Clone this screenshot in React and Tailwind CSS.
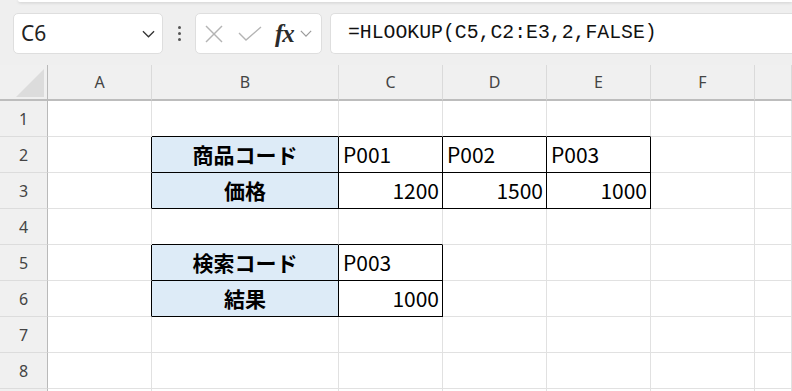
import React from 'react';

const cols = ['A', 'B', 'C', 'D', 'E', 'F', ''];

// cell contents keyed by "col+row"
const cells = {
  B2: { text: '商品コード', label: true },
  C2: { text: 'P001' },
  D2: { text: 'P002' },
  E2: { text: 'P003' },
  B3: { text: '価格', label: true },
  C3: { text: '1200', num: true },
  D3: { text: '1500', num: true },
  E3: { text: '1000', num: true },
  B5: { text: '検索コード', label: true },
  C5: { text: 'P003' },
  B6: { text: '結果', label: true },
  C6: { text: '1000', num: true },
};

const boxed = new Set(['B2', 'C2', 'D2', 'E2', 'B3', 'C3', 'D3', 'E3', 'B5', 'C5', 'B6', 'C6']);

const colName = (i) => 'ABCDEFG'[i];

const hasBlackRight = (c, r) => {
  const me = colName(c) + r;
  const next = colName(c + 1) + r;
  return boxed.has(me) || boxed.has(next);
};

const hasBlackBottom = (c, r) => {
  const me = colName(c) + r;
  const below = colName(c) + (r + 1);
  return boxed.has(me) || boxed.has(below);
};

const Chevron = ({ className }) => (
  <svg viewBox="0 0 14 8" className={className} fill="none" stroke="currentColor" strokeWidth="1.4">
    <polyline points="1,1 7,7 13,1" />
  </svg>
);

const Toolbar = () => (
  <div className="relative h-[65px] bg-[#efefef]">
    <div className="absolute left-[18px] right-0 top-0 h-[2px] bg-white rounded-bl-[4px] shadow-[0_1px_3px_rgba(0,0,0,0.15)]"></div>
    <div className="flex items-start pt-[13px] pl-[13px]">
      {/* Name box */}
      <div className="w-[150px] h-[41px] bg-white border border-[#dedede] rounded-[5px] flex items-center pl-[7px] pr-[7px]">
        <span className="flex-1 text-[21px] text-[#222] font-['Noto_Sans',sans-serif] leading-none">C6</span>
        <Chevron className="w-[13px] h-[8px] text-[#333]" />
      </div>
      {/* Dots */}
      <div className="w-[32px] h-[41px] flex flex-col items-center justify-center gap-[3px]">
        <span className="w-[3px] h-[3px] rounded-full bg-[#555]"></span>
        <span className="w-[3px] h-[3px] rounded-full bg-[#555]"></span>
        <span className="w-[3px] h-[3px] rounded-full bg-[#555]"></span>
      </div>
      {/* Cancel / enter / fx */}
      <div className="w-[127px] h-[41px] bg-white border border-[#dedede] rounded-[5px] flex items-center pl-[8px]">
        <svg viewBox="0 0 20 20" className="w-[20px] h-[20px] text-[#b4b4b4]" fill="none" stroke="currentColor" strokeWidth="1.4">
          <line x1="2" y1="2" x2="18" y2="18" />
          <line x1="18" y1="2" x2="2" y2="18" />
        </svg>
        <svg viewBox="0 0 24 16" className="ml-[14px] w-[24px] h-[16px] text-[#b4b4b4]" fill="none" stroke="currentColor" strokeWidth="1.4">
          <polyline points="1,7 8,14 23,1" />
        </svg>
        <span className="ml-[13px] font-['Liberation_Serif',serif] italic font-bold text-[25px] text-[#2b2b2b] leading-none tracking-[-1px]">fx</span>
        <Chevron className="ml-[6px] w-[12px] h-[7px] text-[#9a9a9a]" />
      </div>
      {/* Formula bar */}
      <div className="ml-[8px] flex-1 h-[41px] bg-white border border-[#dedede] border-r-0 rounded-l-[5px] flex items-center pl-[17px]">
        <span className="font-['Liberation_Mono',monospace] text-[19.8px] text-[#111] leading-none">=HLOOKUP(C5,C2:E3,2,FALSE)</span>
      </div>
    </div>
  </div>
);

const HeaderRow = () => (
  <div className="grid grid-cols-[48px_104px_187px_104px_104px_104px_104px_1fr] bg-[#f0f0f0]">
    <div className="h-[36px] border-r border-r-[#b9b9b9] border-b-2 border-b-[#bdbdbd] flex items-end justify-end pr-[3px] pb-[2px]">
      <svg viewBox="0 0 28 28" className="w-[28px] h-[28px]">
        <polygon points="28,0 28,28 0,28" fill="#dcdcdc" />
      </svg>
    </div>
    {cols.map((c, i) => (
      <div
        key={i}
        className="h-[36px] border-r border-r-[#dadada] border-b-2 border-b-[#bdbdbd] flex items-center justify-center text-[16px] text-[#444] font-['Noto_Sans',sans-serif]"
      >
        {c}
      </div>
    ))}
  </div>
);

const Row = ({ r, label }) => (
  <div className="grid grid-cols-[48px_104px_187px_104px_104px_104px_104px_1fr]">
    <div className="h-[36px] bg-[#f0f0f0] border-r border-r-[#b9b9b9] border-b border-b-[#dcdcdc] flex items-center justify-center text-[16px] text-[#444] font-['Noto_Sans',sans-serif]">
      {label}
    </div>
    {cols.map((_, i) => {
      const key = colName(i) + r;
      const cell = cells[key];
      const right = hasBlackRight(i, r) ? 'border-r-black' : 'border-r-[#e1e1e1]';
      const bottom = hasBlackBottom(i, r) ? 'border-b-black' : 'border-b-[#e1e1e1]';
      let align = 'justify-start pl-[4px]';
      if (cell && cell.label) align = 'justify-center font-bold';
      if (cell && cell.num) align = 'justify-end pr-[3px]';
      const bg = cell && cell.label ? 'bg-[#ddebf7]' : 'bg-white';
      return (
        <div
          key={i}
          className={`h-[36px] border-r border-b ${right} ${bottom} ${bg} ${align} flex items-center text-[21px] text-black font-['Noto_Sans_CJK_JP',sans-serif] leading-none`}
        >
          {cell ? cell.text : ''}
        </div>
      );
    })}
  </div>
);

const App = () => {
  return (
    <div className="w-[792px] h-[391px] overflow-hidden bg-white">
      <Toolbar />
      <HeaderRow />
      {[1, 2, 3, 4, 5, 6, 7, 8].map((r) => (
        <Row key={r} r={r} label={r} />
      ))}
      <Row r={9} label="" />
    </div>
  );
};

export default App;
